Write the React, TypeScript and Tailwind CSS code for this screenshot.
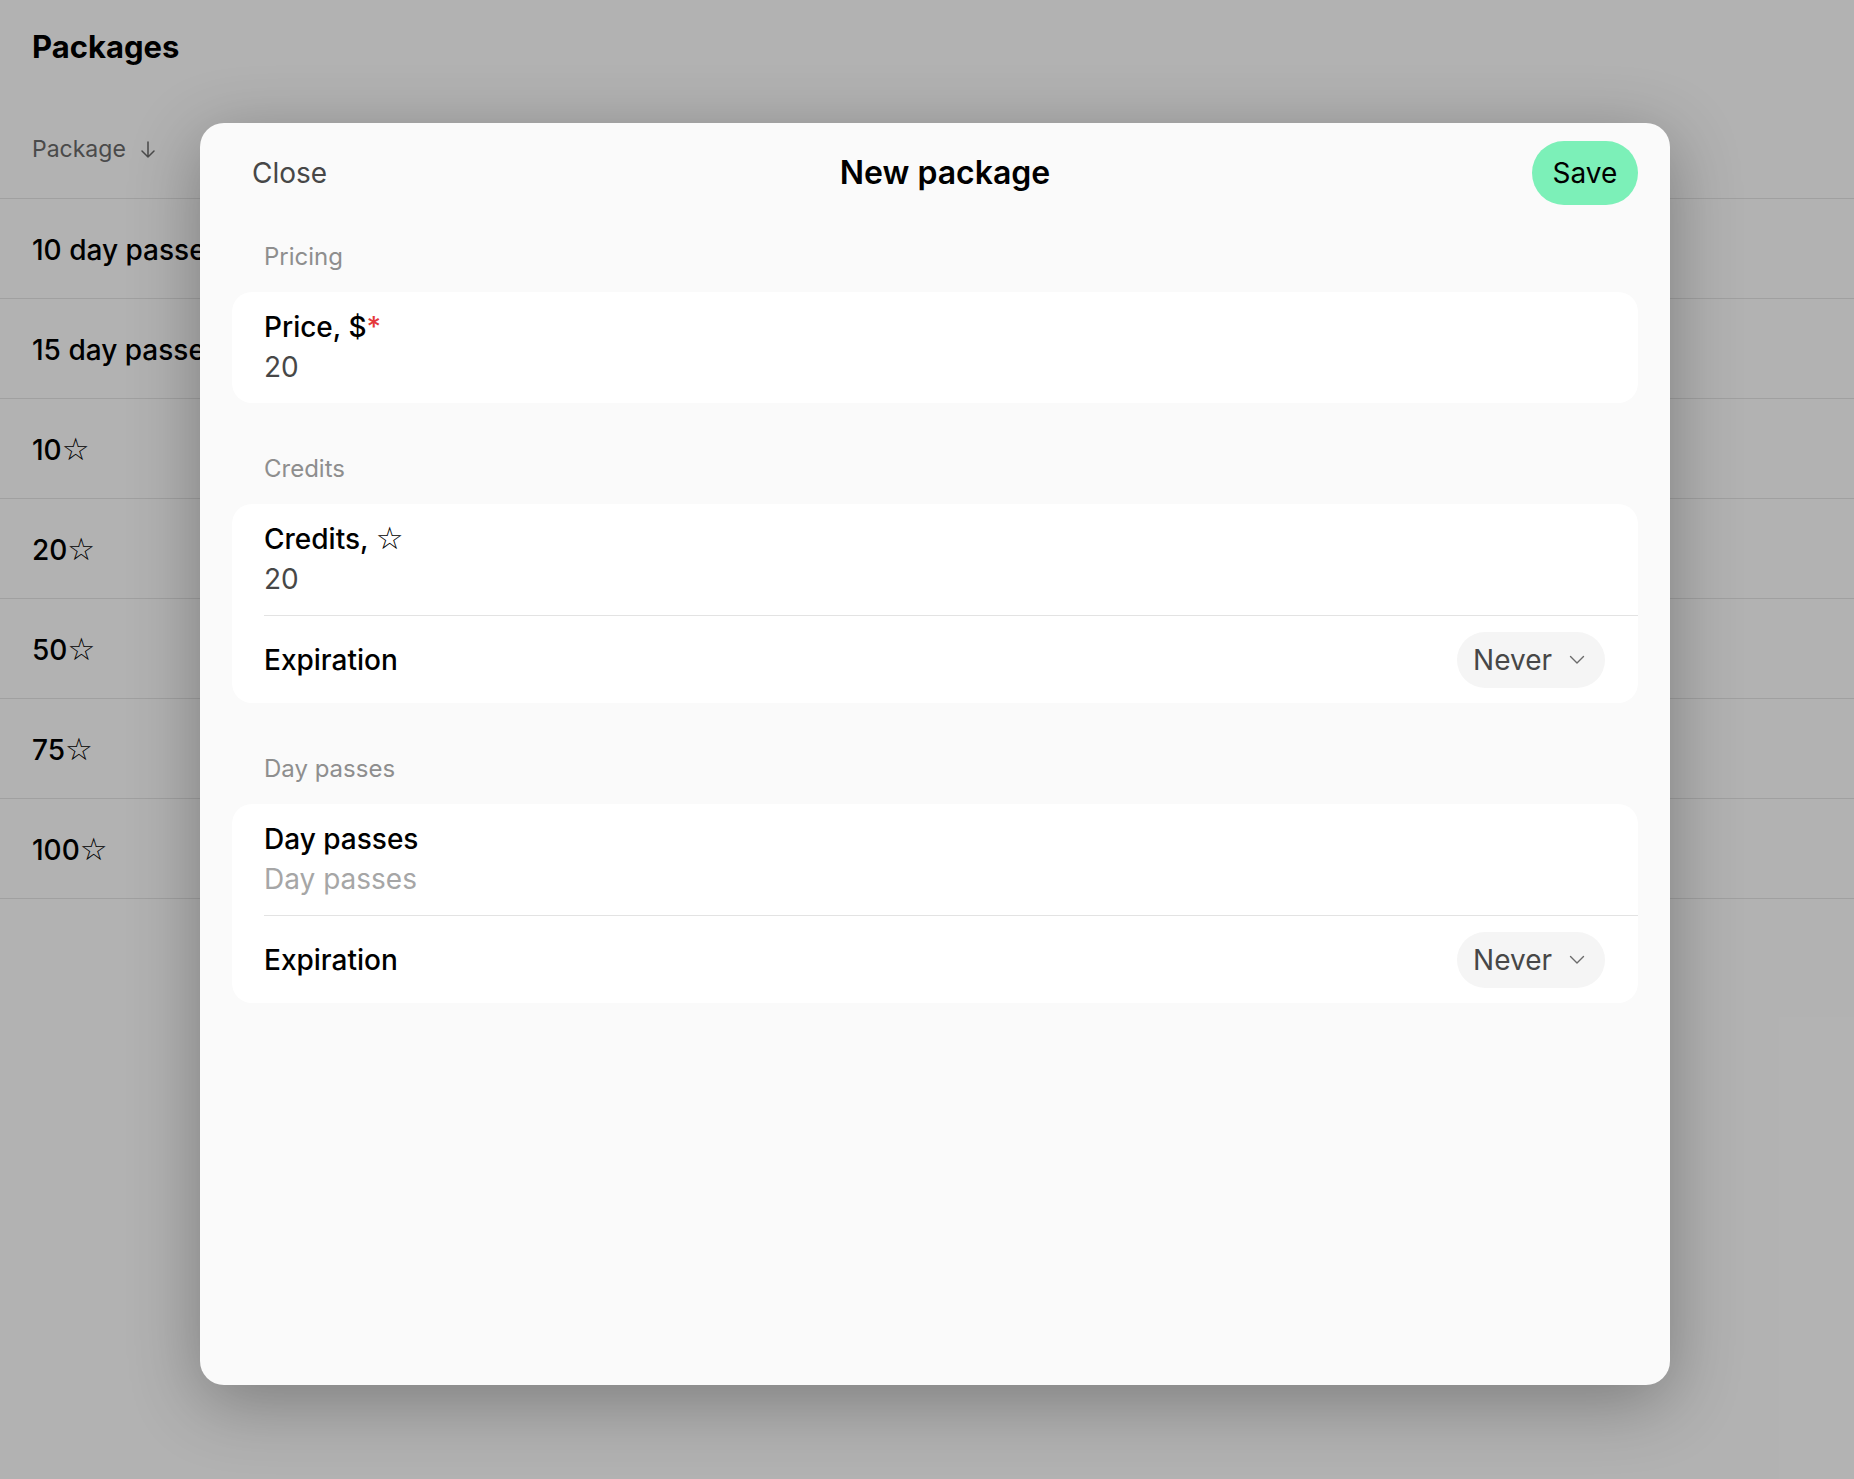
import { ReactNode } from "react";

const packages: { amount: string; star?: boolean }[] = [
  { amount: "10 day passes" },
  { amount: "15 day passes" },
  { amount: "10", star: true },
  { amount: "20", star: true },
  { amount: "50", star: true },
  { amount: "75", star: true },
  { amount: "100", star: true },
];

function Star() {
  return (
    <span className="font-['DejaVu_Sans',sans-serif] text-[31px] leading-none font-normal">☆</span>
  );
}

function ArrowDownIcon() {
  return (
    <svg width="16" height="18" viewBox="0 0 16 18" fill="none">
      <path
        d="M8 1v15M2 10l6 6 6-6"
        stroke="currentColor"
        strokeWidth="1.5"
        strokeLinecap="round"
        strokeLinejoin="round"
      />
    </svg>
  );
}

function ChevronDown() {
  return (
    <svg width="16" height="10" viewBox="0 0 16 10" fill="none">
      <path
        d="M1.5 1.5l6.5 6.5 6.5-6.5"
        stroke="#6b6b6b"
        strokeWidth="1.4"
        strokeLinecap="round"
        strokeLinejoin="round"
      />
    </svg>
  );
}

function SectionLabel({ children, first }: { children: ReactNode; first?: boolean }) {
  return (
    <div
      className={`${first ? "mt-[36px]" : "mt-[50px]"} pl-[32px] text-[24px] leading-[32px] text-[#8e8e8e]`}
    >
      {children}
    </div>
  );
}

function Field({
  label,
  value,
  placeholder,
}: {
  label: ReactNode;
  value?: string;
  placeholder?: string;
}) {
  return (
    <div className="px-[32px] pt-[15px] pb-[16px] text-[28px] leading-[40px]">
      <div className="h-[40px] font-medium text-black">{label}</div>
      {value ? (
        <div className="text-[#474747]">{value}</div>
      ) : (
        <div className="text-[#a6a6a6]">{placeholder}</div>
      )}
    </div>
  );
}

function ExpirationRow() {
  return (
    <div className="flex h-[87px] items-center justify-between pl-[32px] pr-[33px]">
      <span className="text-[28px] font-medium text-black">Expiration</span>
      <button className="flex h-[56px] items-center gap-[17px] rounded-full bg-[#f5f5f5] pl-[16px] pr-[20px] text-[28px] text-[#474747]">
        Never
        <ChevronDown />
      </button>
    </div>
  );
}

function Divider() {
  return <div className="ml-[32px] border-t border-[#e3e3e3]" />;
}

function NewPackageModal() {
  return (
    <div className="absolute left-[200px] top-[123px] h-[1262px] w-[1470px] rounded-[24px] bg-[#fafafa] shadow-[0_16px_70px_rgba(0,0,0,0.3)]">
      {/* Header */}
      <div className="grid grid-cols-3 items-center pl-[52px] pr-[32px] pt-[18px]">
        <button className="justify-self-start text-[28px] text-[#474747]">Close</button>
        <h2 className="justify-self-center text-[32px] font-semibold text-black">New package</h2>
        <button className="h-[64px] w-[106px] justify-self-end rounded-full bg-[#7cf0b8] text-[28px] text-black">
          Save
        </button>
      </div>

      <div className="px-[32px]">
        <SectionLabel first>Pricing</SectionLabel>
        <div className="mt-[19px] rounded-[20px] bg-white">
          <Field
            label={
              <>
                Price, $<span className="text-[#e5383b]">*</span>
              </>
            }
            value="20"
          />
        </div>

        <SectionLabel>Credits</SectionLabel>
        <div className="mt-[19px] rounded-[20px] bg-white">
          <Field
            label={
              <>
                Credits, <Star />
              </>
            }
            value="20"
          />
          <Divider />
          <ExpirationRow />
        </div>

        <SectionLabel>Day passes</SectionLabel>
        <div className="mt-[19px] rounded-[20px] bg-white">
          <Field label="Day passes" placeholder="Day passes" />
          <Divider />
          <ExpirationRow />
        </div>
      </div>
    </div>
  );
}

export default function App() {
  return (
    <div className="relative h-[1479px] w-full overflow-hidden bg-white font-['Inter',sans-serif]">
      <h1 className="h-[99px] pl-[32px] pt-[29px] text-[31px] leading-[36px] font-bold text-black">
        Packages
      </h1>

      <div className="flex h-[100px] items-center gap-[14px] border-b border-[#e5e5e5] pl-[32px] pt-[2px] text-[23px] text-[#6b6b6b]">
        Package
        <ArrowDownIcon />
      </div>

      {packages.map((p) => (
        <div
          key={p.amount}
          className="flex h-[100px] items-center border-b border-[#e5e5e5] pl-[32px] pt-[2px] text-[28px] font-medium text-black"
        >
          {p.amount}
          {p.star && <Star />}
        </div>
      ))}

      {/* Dimmed backdrop */}
      <div className="absolute inset-0 bg-black/30" />

      <NewPackageModal />
    </div>
  );
}
